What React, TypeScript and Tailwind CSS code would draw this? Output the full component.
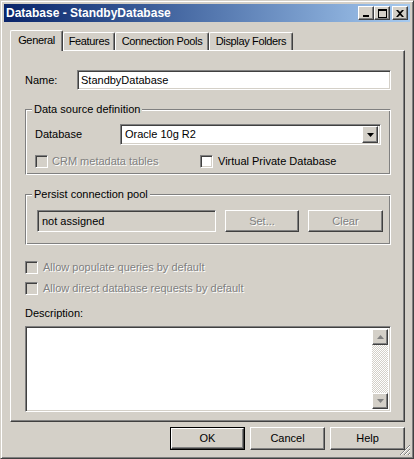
import React from "react";

const sunken =
  "border border-t-[#808080] border-l-[#808080] border-b-white border-r-white shadow-[inset_1px_1px_0_#404040,inset_-1px_-1px_0_#D4D0C8]";
const raised =
  "border border-t-white border-l-white border-b-[#404040] border-r-[#404040] shadow-[inset_-1px_-1px_0_#808080]";
const etched =
  "border border-t-[#808080] border-l-[#808080] border-b-white border-r-white shadow-[inset_1px_1px_0_#fff,inset_-1px_-1px_0_#808080]";
const disabledText = "text-[#808080] [text-shadow:1px_1px_0_#fff]";

function CheckBox({ disabled }: { disabled?: boolean }) {
  return (
    <div
      className={`w-[13px] h-[13px] shrink-0 ${sunken} ${disabled ? "bg-[#D4D0C8]" : "bg-white"}`}
    />
  );
}

function Btn({
  children,
  className = "",
  disabled,
  def,
}: {
  children: React.ReactNode;
  className?: string;
  disabled?: boolean;
  def?: boolean;
}) {
  const inner = (
    <div
      className={`h-full w-full flex items-center justify-center bg-[#D4D0C8] ${raised} ${disabled ? disabledText : "text-black"}`}
    >
      {children}
    </div>
  );
  if (def) {
    return <div className={`border border-black ${className}`}>{inner}</div>;
  }
  return <div className={className}>{inner}</div>;
}

function TitleBtn({ children }: { children: React.ReactNode }) {
  return (
    <div className={`w-[16px] h-[14px] bg-[#D4D0C8] ${raised} flex items-center justify-center`}>
      {children}
    </div>
  );
}

function Tab({
  label,
  w,
  selected,
}: {
  label: string;
  w: number;
  selected?: boolean;
}) {
  return (
    <div
      style={{ width: w }}
      className={`relative flex items-center justify-center tracking-[-0.35px] bg-[#D4D0C8] border-t border-l border-t-white border-l-white border-r border-r-[#404040] shadow-[inset_-1px_0_0_#808080] rounded-tl-[2px] rounded-tr-[2px] ${
        selected ? "h-[21px] -mb-[1px] z-10 pb-[2px]" : "h-[18px]"
      }`}
    >
      {label}
    </div>
  );
}

export default function App() {
  return (
    <div className="w-[414px] h-[459px] relative bg-[#D4D0C8] border border-t-[#D4D0C8] border-l-[#D4D0C8] border-r-[#404040] border-b-[#404040] shadow-[inset_1px_1px_0_#fff,inset_-1px_-1px_0_#808080] p-[3px] font-['Liberation_Sans',Arial,sans-serif] text-[11px] text-black leading-[13px] overflow-hidden">
      {/* Title bar */}
      <div className="h-[18px] flex items-center bg-gradient-to-r from-[#0A246A] to-[#A6CAF0] pl-[2px] pr-[2px]">
        <div className="text-white font-bold text-[12px] flex-1">Database - StandbyDatabase</div>
        <div className="flex items-center">
          <TitleBtn>
            <svg width="8" height="8" viewBox="0 0 8 8">
              <rect x="1" y="6" width="6" height="2" fill="#000" />
            </svg>
          </TitleBtn>
          <TitleBtn>
            <svg width="9" height="9" viewBox="0 0 9 9">
              <rect x="0.5" y="0.5" width="8" height="8" fill="none" stroke="#000" />
              <rect x="0" y="0" width="9" height="2" fill="#000" />
            </svg>
          </TitleBtn>
          <div className="w-[2px]" />
          <TitleBtn>
            <svg width="8" height="7" viewBox="0 0 8 7">
              <path d="M0 0 L2 0 L4 2 L6 0 L8 0 L5 3.5 L8 7 L6 7 L4 5 L2 7 L0 7 L3 3.5 Z" fill="#000" />
            </svg>
          </TitleBtn>
        </div>
      </div>

      {/* Tabs */}
      <div className="mt-[8px] ml-[6px] h-[20px] flex items-end">
        <Tab label="General" w={53} selected />
        <Tab label="Features" w={52} />
        <Tab label="Connection Pools" w={94} />
        <Tab label="Display Folders" w={84} />
      </div>

      {/* Panel */}
      <div className="ml-[6px] w-[395px] h-[372px] border-t border-l border-t-white border-l-white border-r border-b border-r-[#404040] border-b-[#404040] shadow-[inset_-1px_-1px_0_#808080]">
        <div className="ml-[14px] w-[366px]">
          {/* Name */}
          <div className="mt-[19px] h-[20px] flex items-center">
            <div className="w-[52px]">Name:</div>
            <div className={`flex-1 h-full bg-white ${sunken} flex items-center pl-[3px]`}>
              StandbyDatabase
            </div>
          </div>

          {/* Group 1 */}
          <div className={`relative mt-[19px] h-[66px] ${etched} pt-[14px] pl-[9px]`}>
            <div className="absolute -top-[7px] left-[6px] bg-[#D4D0C8] px-[2px]">Data source definition</div>
            <div className="h-[21px] flex items-center">
              <div className="w-[85px]">Database</div>
              <div className={`w-[261px] h-full bg-white ${sunken} flex items-center p-[2px]`}>
                <div className="flex-1 pl-[2px]">Oracle 10g R2</div>
                <div className={`w-[16px] h-[17px] bg-[#D4D0C8] ${raised} flex items-center justify-center`}>
                  <svg width="7" height="4" viewBox="0 0 7 4">
                    <path d="M0 0 H7 L3.5 4 Z" fill="#000" />
                  </svg>
                </div>
              </div>
            </div>
            <div className="mt-[10px] h-[13px] flex items-center">
              <CheckBox disabled />
              <div className={`ml-[4px] w-[148px] ${disabledText}`}>CRM metadata tables</div>
              <CheckBox />
              <div className="ml-[5px]">Virtual Private Database</div>
            </div>
          </div>

          {/* Group 2 */}
          <div className={`relative mt-[19px] h-[51px] ${etched} pt-[15px] pl-[11px]`}>
            <div className="absolute -top-[7px] left-[6px] bg-[#D4D0C8] px-[2px]">Persist connection pool</div>
            <div className="h-[22px] flex items-center">
              <div className={`w-[179px] h-full bg-[#D4D0C8] ${sunken} flex items-center pl-[4px]`}>
                not assigned
              </div>
              <Btn className="ml-[9px] w-[74px] h-full" disabled>
                Set...
              </Btn>
              <Btn className="ml-[9px] w-[75px] h-full" disabled>
                Clear
              </Btn>
            </div>
          </div>

          {/* Checkboxes */}
          <div className="mt-[16px] h-[13px] flex items-center">
            <CheckBox disabled />
            <div className={`ml-[5px] ${disabledText}`}>Allow populate queries by default</div>
          </div>
          <div className="mt-[8px] h-[13px] flex items-center">
            <CheckBox disabled />
            <div className={`ml-[5px] ${disabledText}`}>Allow direct database requests by default</div>
          </div>

          {/* Description */}
          <div className="mt-[12px] h-[13px]">Description:</div>
          <div className={`mt-[6px] h-[86px] bg-white ${sunken} p-[2px] flex justify-end`}>
            <div className="w-[16px] h-full flex flex-col bg-[repeating-conic-gradient(#fff_0_25%,#D4D0C8_0_50%)] bg-[length:2px_2px]">
              <div className={`w-[16px] h-[16px] bg-[#D4D0C8] ${raised} flex items-center justify-center`}>
                <svg width="7" height="4" viewBox="0 0 7 4">
                  <path d="M3.5 0 L7 4 H0 Z" fill="#808080" />
                </svg>
              </div>
              <div className="flex-1" />
              <div className={`w-[16px] h-[16px] bg-[#D4D0C8] ${raised} flex items-center justify-center`}>
                <svg width="7" height="4" viewBox="0 0 7 4">
                  <path d="M0 0 H7 L3.5 4 Z" fill="#808080" />
                </svg>
              </div>
            </div>
          </div>
        </div>
      </div>

      {/* Bottom buttons */}
      <div className="mt-[5px] h-[23px] flex justify-end gap-[5px] pr-[5px]">
        <Btn className="w-[75px] h-full" def>
          OK
        </Btn>
        <Btn className="w-[75px] h-full">Cancel</Btn>
        <Btn className="w-[75px] h-full">Help</Btn>
      </div>

      {/* Size grip */}
      <svg className="absolute right-[2px] bottom-[2px]" width="12" height="12" viewBox="0 0 12 12">
        <path d="M11 1 L1 11 M11 5 L5 11 M11 9 L9 11" stroke="#808080" strokeWidth="1" />
        <path d="M11 2 L2 11 M11 6 L6 11 M11 10 L10 11" stroke="#fff" strokeWidth="1" />
      </svg>
    </div>
  );
}
